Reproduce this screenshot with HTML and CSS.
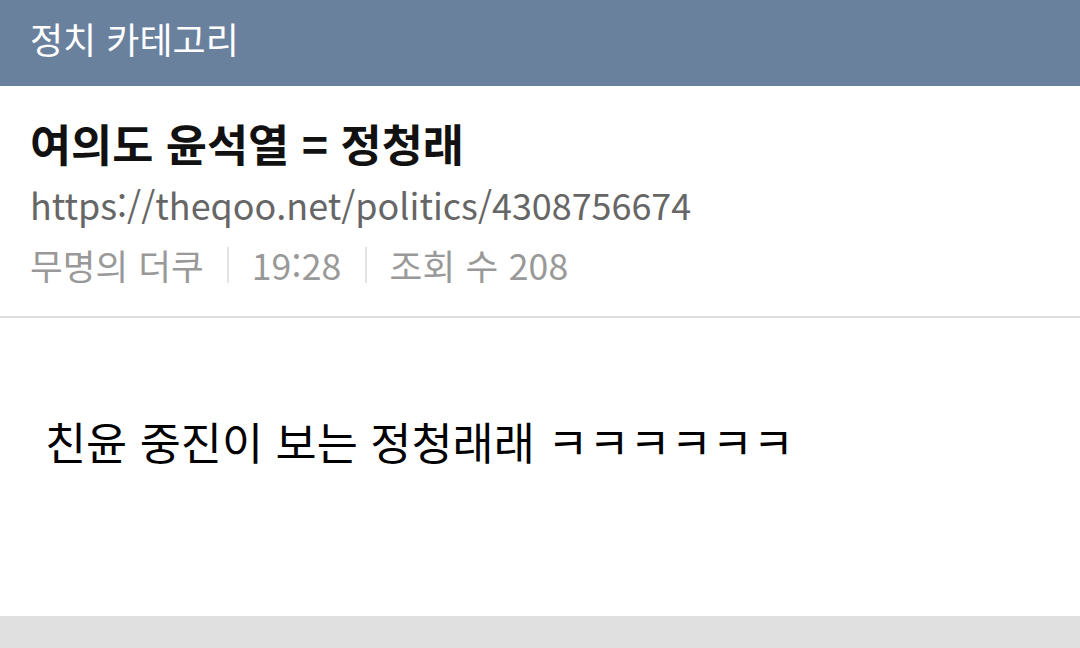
FILE: index.html
```html
<!DOCTYPE html>
<html lang="ko">
<head>
<meta charset="utf-8">
<link rel="stylesheet" href="styles.css">
</head>
<body>
<div class="page">
  <header class="topbar">정치 카테고리</header>
  <section class="post-head">
    <h1 class="title">여의도 윤석열 = 정청래</h1>
    <div class="url">https://theqoo.net/politics/4308756674</div>
    <div class="meta">
      <span>무명의 더쿠</span>
      <span class="sep"></span>
      <span>19:28</span>
      <span class="sep"></span>
      <span>조회 수 208</span>
    </div>
  </section>
  <section class="post-body">
    <p class="content">친윤 중진이 보는 정청래래 ㅋㅋㅋㅋㅋㅋ</p>
  </section>
  <footer class="bottom"></footer>
</div>
</body>
</html>
```

FILE: styles.css
```css
html, body {
  margin: 0;
  padding: 0;
  background: #ffffff;
}
.page {
  width: 1080px;
  height: 648px;
  display: flex;
  flex-direction: column;
  font-family: "Noto Sans CJK KR", "Noto Sans", sans-serif;
  overflow: hidden;
}
.topbar {
  height: 86px;
  flex: none;
  background: #6a819e;
  color: #ffffff;
  font-size: 36px;
  line-height: 76px;
  padding-left: 30px;
  box-sizing: border-box;
}
.post-head {
  flex: none;
  height: 232px;
  box-sizing: border-box;
  border-bottom: 2px solid #dedede;
  padding: 27px 30px 0;
}
.title {
  margin: 0;
  font-size: 44.7px;
  font-weight: 700;
  color: #111111;
  line-height: 60px;
}
.url {
  font-size: 35.9px;
  color: #666666;
  line-height: 62px;
}
.meta {
  display: flex;
  align-items: center;
  font-size: 35.6px;
  color: #999999;
  line-height: 60px;
}
.sep {
  width: 2px;
  height: 36px;
  background: #e4e4e4;
  margin: 0 23px;
}
.sep + span {
  letter-spacing: 0.2px;
}
.post-body {
  flex: 1;
  padding: 0 45px;
}
.content {
  margin: 0;
  padding-top: 98px;
  font-size: 44.7px;
  line-height: 50px;
  color: #000000;
}
.bottom {
  flex: none;
  height: 32px;
  background: #e0e0e0;
}
```
